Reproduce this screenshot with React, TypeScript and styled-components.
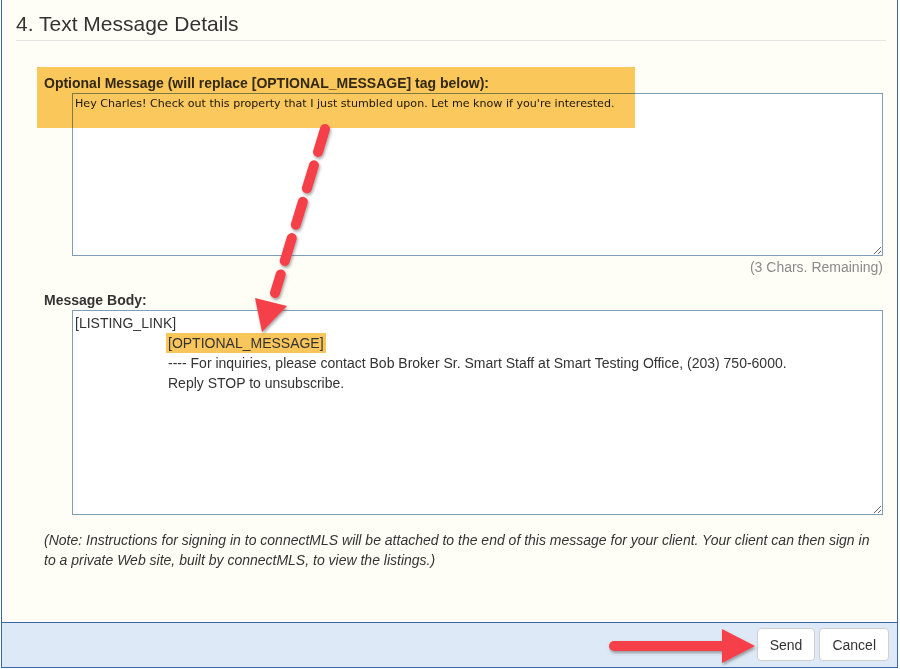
import React from "react";
import styled, { createGlobalStyle } from "styled-components";

const Global = createGlobalStyle`
  html, body { margin: 0; padding: 0; background: #ffffff; }
  body { font-family: "Liberation Sans", Arial, sans-serif; color: #333; }
  * { box-sizing: border-box; }
`;

const Page = styled.div`
  position: relative;
  width: 900px;
  height: 669px;
`;

const Panel = styled.div`
  width: 897px;
  margin-left: 1px;
  border-left: 1px solid #3668a6;
  border-right: 1px solid #3668a6;
  border-bottom: 1px solid #3668a6;
  background: #fffef6;
  display: flex;
  flex-direction: column;
`;

const Content = styled.div`
  height: 622px;
  padding: 0 11px 0 14px;
  display: flex;
  flex-direction: column;
`;

const Heading = styled.h2`
  margin: 0;
  padding: 10px 0 2px;
  font-size: 21px;
  line-height: 28px;
  font-weight: normal;
  color: #333;
  border-bottom: 1px solid #e6e6e2;
`;

const Section = styled.div`
  display: flex;
  flex-direction: column;
  padding-left: 28px;
  margin-top: ${(p: { $top: number }) => p.$top}px;
`;

const Label = styled.label`
  font-size: 14px;
  line-height: 16px;
  font-weight: bold;
  color: #333;
  margin-bottom: 2px;
`;

const Field = styled.div`
  padding-left: 28px;
  display: flex;
  flex-direction: column;
`;

const TextArea = styled.textarea`
  width: 811px;
  height: 163px;
  border: 1px solid #7f9db9;
  background: #fff;
  padding: 2px 2px;
  font-family: "DejaVu Sans", Verdana, sans-serif;
  font-size: 11.1px;
  line-height: 16px;
  color: #222;
  resize: both;
  outline: none;
`;

const BodyBox = styled.div`
  width: 811px;
  height: 205px;
  border: 1px solid #7f9db9;
  background: #fff;
  padding: 2px 2px;
  font-size: 14px;
  line-height: 20px;
  color: #333;
  resize: both;
  overflow: auto;
`;

const Indented = styled.div`
  padding-left: 93px;
`;

const Tag = styled.span`
  display: inline-block;
  background: #f9c65b;
  line-height: 20px;
  padding: 0 2px;
  margin-left: -2px;
`;

const Remaining = styled.div`
  text-align: right;
  font-size: 14px;
  line-height: 18px;
  color: #8a8a8a;
  margin-top: 2px;
  width: 811px;
`;

const Note = styled.p`
  margin: 15px 0 0 28px;
  font-size: 14px;
  line-height: 20px;
  font-style: italic;
  color: #333;
  width: 836px;
`;

const Footer = styled.div`
  height: 45px;
  border-top: 1px solid #3668a6;
  background: #dde9f6;
  display: flex;
  justify-content: flex-end;
  align-items: flex-start;
  gap: 4px;
  padding: 5px 8px 0 0;
`;

const Button = styled.button`
  height: 33px;
  padding: 0 12px;
  background: #fff;
  border: 1px solid #cfcfcf;
  border-radius: 4px;
  font-family: "Liberation Sans", Arial, sans-serif;
  font-size: 14px;
  color: #333;
  cursor: pointer;
`;

const Highlight = styled.div`
  position: absolute;
  left: 37px;
  top: 67px;
  width: 598px;
  height: 61px;
  background: #fac85d;
  mix-blend-mode: multiply;
  pointer-events: none;
`;

const Overlay = styled.svg`
  position: absolute;
  left: 0;
  top: 0;
  pointer-events: none;
`;

export default function App() {
  return (
    <Page>
      <Global />
      <Panel>
        <Content>
          <Heading>4. Text Message Details</Heading>
          <Section $top={34}>
            <Label>Optional Message (will replace [OPTIONAL_MESSAGE] tag below):</Label>
            <Field>
              <TextArea defaultValue="Hey Charles! Check out this property that I just stumbled upon. Let me know if you're interested." />
              <Remaining>(3 Chars. Remaining)</Remaining>
            </Field>
          </Section>
          <Section $top={16}>
            <Label>Message Body:</Label>
            <Field>
              <BodyBox>
                <div>[LISTING_LINK]</div>
                <Indented>
                  <Tag>[OPTIONAL_MESSAGE]</Tag>
                  <div>---- For inquiries, please contact Bob Broker Sr. Smart Staff at Smart Testing Office, (203) 750-6000.</div>
                  <div>Reply STOP to unsubscribe.</div>
                </Indented>
              </BodyBox>
            </Field>
          </Section>
          <Note>
            (Note: Instructions for signing in to connectMLS will be attached to the end of this message for your client. Your client can then sign in to a private Web site, built by connectMLS, to view the listings.)
          </Note>
        </Content>
        <Footer>
          <Button>Send</Button>
          <Button>Cancel</Button>
        </Footer>
      </Panel>
      <Highlight />
      <Overlay width="900" height="669" viewBox="0 0 900 669">
        <defs>
          <filter id="sh" x="-20%" y="-20%" width="140%" height="140%">
            <feDropShadow dx="1" dy="2" stdDeviation="1.5" floodColor="#555" floodOpacity="0.55" />
          </filter>
        </defs>
        <g filter="url(#sh)">
          <line x1="325" y1="129" x2="275" y2="293" stroke="#f5414a" strokeWidth="10" strokeLinecap="round" strokeDasharray="24 14" />
          <polygon points="262,332 255,298 287,306" fill="#f5414a" />
        </g>
        <g filter="url(#sh)">
          <line x1="614" y1="646" x2="728" y2="646" stroke="#f5414a" strokeWidth="10" strokeLinecap="round" />
          <polygon points="722,629 755,646 722,663" fill="#f5414a" />
        </g>
      </Overlay>
    </Page>
  );
}
